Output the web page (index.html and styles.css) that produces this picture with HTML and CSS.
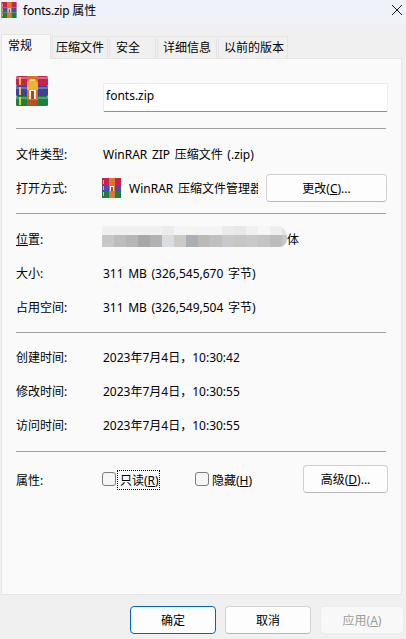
FILE: index.html
```html
<!DOCTYPE html>
<html lang="zh-CN">
<head>
  <meta charset="UTF-8" />
  <title>fonts.zip 属性</title>
  <link rel="stylesheet" href="styles.css">
</head>
<body>
  <div class="window">
    <div class="titlebar">
      <svg class="title-icon" viewBox="0 0 19 20">
        <use href="#rar-small"></use>
      </svg>
      <span class="title-text">fonts.zip 属性</span>
      <svg class="close" viewBox="0 0 10 10">
        <path d="M0 0L10 10M10 0L0 10" stroke="#1a1a1a" stroke-width="1" fill="none"/>
      </svg>
    </div>

    <div class="tabs">
      <div class="tab tab-active">常规</div>
      <div class="tab tab-zip">压缩文件</div>
      <div class="tab tab-sec">安全</div>
      <div class="tab tab-info">详细信息</div>
      <div class="tab tab-prev">以前的版本</div>
    </div>

    <div class="panel">
      <div class="head">
        <svg class="file-icon" viewBox="0 0 32 30">
          <rect x="0" y="0" width="32" height="10" rx="1.5" fill="#c4234f"/>
          <rect x="0" y="1" width="32" height="2" fill="#e0647f"/>
          <rect x="0" y="10" width="32" height="10" rx="1" fill="#3f3f9c"/>
          <rect x="0" y="11" width="32" height="2" fill="#6f6fc4"/>
          <rect x="0" y="20" width="32" height="10" rx="1.5" fill="#1c7f3f"/>
          <rect x="0" y="21" width="32" height="2" fill="#46a868"/>
          <rect x="3" y="1" width="2" height="8" fill="#f2c230"/>
          <rect x="3" y="11" width="2" height="8" fill="#f2c230"/>
          <rect x="3" y="21" width="2" height="8" fill="#f2c230"/>
          <rect x="11" y="0" width="11" height="30" fill="#d9702a"/>
          <rect x="11" y="24" width="11" height="6" fill="#b8501c"/>
          <path d="M14 3h5l3 4v7H11V7z" fill="#eeb23a"/>
          <rect x="14" y="3" width="5" height="2" fill="#f8d878"/>
          <rect x="13" y="14" width="7" height="9" fill="#f6efe4"/>
          <rect x="15" y="15" width="3" height="8" fill="#a9481a"/>
        </svg>
        <div class="name-box">fonts.zip</div>
      </div>

      <div class="section">
        <div class="row">
          <span class="label">文件类型:</span>
          <span>WinRAR ZIP 压缩文件 (.zip)</span>
        </div>
        <div class="row">
          <span class="label">打开方式:</span>
          <svg class="app-icon" viewBox="0 0 19 20">
            <g id="rar-small">
              <rect x="0" y="0" width="19" height="7" fill="#c4234f"/>
              <rect x="0" y="7" width="19" height="6" fill="#4a4aa8"/>
              <rect x="0" y="13" width="19" height="7" fill="#1c7f3f"/>
              <rect x="1" y="2" width="1" height="4" fill="#f2c230"/>
              <rect x="1" y="8" width="1" height="4" fill="#f2c230"/>
              <rect x="1" y="14" width="1" height="4" fill="#f2c230"/>
              <rect x="7" y="0" width="6" height="20" fill="#e0762a"/>
              <rect x="8" y="8" width="4" height="5" fill="#f6efe4"/>
              <rect x="9" y="9" width="2" height="4" fill="#a9481a"/>
            </g>
          </svg>
          <span class="app-name">WinRAR 压缩文件管理器</span>
          <button class="btn btn-change">更改(<u>C</u>)...</button>
        </div>
      </div>

      <div class="section">
        <div class="row">
          <span class="label"><u>位</u>置:</span>
          <span class="blur"></span><span>体</span>
        </div>
        <div class="row">
          <span class="label">大小:</span>
          <span>311 MB (326,545,670 字节)</span>
        </div>
        <div class="row">
          <span class="label">占用空间:</span>
          <span>311 MB (326,549,504 字节)</span>
        </div>
      </div>

      <div class="section section-times">
        <div class="row">
          <span class="label">创建时间:</span>
          <span>2023年7月4日，10:30:42</span>
        </div>
        <div class="row">
          <span class="label">修改时间:</span>
          <span>2023年7月4日，10:30:55</span>
        </div>
        <div class="row">
          <span class="label">访问时间:</span>
          <span>2023年7月4日，10:30:55</span>
        </div>
      </div>

      <div class="attrs">
        <span class="label">属性:</span>
        <span class="check check-first"></span>
        <span class="check-label check-focus">只读(<u>R</u>)</span>
        <span class="check check-second"></span>
        <span class="check-label">隐藏(<u>H</u>)</span>
        <button class="btn btn-advanced">高级(<u>D</u>)...</button>
      </div>
    </div>

    <div class="footer">
      <button class="btn btn-foot btn-default">确定</button>
      <button class="btn btn-foot">取消</button>
      <button class="btn btn-foot btn-disabled">应用(<u>A</u>)</button>
    </div>
  </div>
</body>
</html>
```

FILE: styles.css
```css
body {
  margin: 0;
  background: #f0f0f0;
  font-family: "Noto Sans", "Noto Sans CJK SC", sans-serif;
  font-size: 12px;
  color: #000;
  word-spacing: 1.5px;
  overflow: hidden;
}

.window {
  width: 406px;
  height: 639px;
  display: flex;
  flex-direction: column;
}

.titlebar {
  height: 25px;
  box-sizing: border-box;
  background: #eff3f9;
  display: flex;
  align-items: center;
  padding: 0 0 6px 1px;
}

.title-icon {
  width: 16px;
  height: 16px;
}

.title-text {
  margin-left: 6px;
  word-spacing: 0;
  letter-spacing: -0.2px;
}

.close {
  width: 10px;
  height: 10px;
  margin-left: auto;
  margin-right: 4px;
}

.tabs {
  display: flex;
  height: 33px;
  padding: 10px 0 0 1px;
  box-sizing: border-box;
  align-items: flex-end;
}

.tab {
  height: 21px;
  line-height: 22px;
  margin-left: 1px;
  padding-left: 5px;
  background: #f0f0f0;
  border: 1px solid #e5e5e5;
  border-bottom: none;
  box-sizing: content-box;
}

.tab-active {
  width: 42px;
  height: 24px;
  margin-left: 0;
  padding-left: 6px;
  line-height: 21px;
  background: #f9f9f9;
  position: relative;
  z-index: 1;
  margin-bottom: -1px;
}

.tab-zip { width: 51px; padding-left: 3px; }
.tab-sec { width: 39px; padding-left: 6px; }
.tab-info { width: 53px; }
.tab-prev { width: 63px; }

.panel {
  width: 401px;
  height: 537px;
  margin-left: 1px;
  box-sizing: border-box;
  background: #fafafa;
  border: 1px solid #e5e5e5;
  padding: 0 15px 0 14px;
}

.head {
  height: 70px;
  display: flex;
  align-items: flex-start;
  border-bottom: 1px solid #a0a0a0;
  box-sizing: border-box;
}

.file-icon {
  width: 32px;
  height: 30px;
  margin-top: 17px;
  flex: none;
}

.name-box {
  width: 285px;
  height: 29px;
  margin: 24px -2px 0 55px;
  padding-left: 2px;
  box-sizing: border-box;
  flex: none;
  background: #fff;
  border: 1px solid #ececec;
  border-bottom: 1px solid #8f8f8f;
  border-radius: 2px;
  line-height: 24px;
}

.section {
  padding: 8px 0;
  border-bottom: 1px solid #a0a0a0;
}

.section-times {
  padding: 7px 0 9px;
}

.row {
  height: 34px;
  display: flex;
  align-items: center;
}

.label {
  width: 87px;
  flex: none;
}

.app-icon {
  width: 19px;
  height: 20px;
  margin-left: -1px;
  margin-right: 8px;
  flex: none;
}

.app-name {
  width: 129px;
  white-space: nowrap;
  overflow: hidden;
  flex: none;
}

.btn {
  font-family: inherit;
  font-size: 12px;
  word-spacing: 0;
  color: #000;
  background: #fdfdfd;
  border: 1px solid #d0d0d0;
  border-bottom-color: #b8b8b8;
  border-radius: 4px;
  box-sizing: border-box;
  height: 28px;
  padding: 0;
  flex: none;
}

.btn-change {
  width: 121px;
  margin-left: 8px;
}

.blur {
  width: 185px;
  height: 21px;
  margin: 0 0 5px -1px;
  flex: none;
  border-radius: 0 10px 8px 0;
  background:
    linear-gradient(90deg, #f1f1f1 0 60px, #ececec 60px 72px, #f3f4f6 72px 84px, #f5f4f2 84px 96px, #f2f3f5 96px 108px, #f4f4f4 108px 120px, #ebebeb 120px 132px, #e8e8e8 132px 144px, #f0f0f0 144px 156px, #f6f6f6 156px 168px, #eeeeee 168px 180px, #e4e4e4 180px) top left / 100% 9px no-repeat,
    linear-gradient(90deg, #c8c8c6 0 12px, #bdbdbb 12px 24px, #b5b6b5 24px 36px, #a9a8a6 36px 48px, #b0b2b4 48px 60px, #dadddf 60px 72px, #cdc9c4 72px 84px, #abaeb4 84px 96px, #bbbab8 96px 108px, #c0c0be 108px 120px, #c8c9cc 120px 132px, #c6c6c4 132px 144px, #c9c9c7 144px 156px, #c4c4c4 156px 168px, #bcbcbc 168px 180px, #c6c6c4 180px);
}

.attrs {
  height: 56px;
  display: flex;
  align-items: center;
}

.check {
  width: 14px;
  height: 14px;
  border: 1px solid #7c7c7c;
  border-radius: 3px;
  box-sizing: border-box;
  background: #f5f5f5;
  flex: none;
  margin-bottom: 2px;
}

.check-first {
  margin-left: -1px;
}

.check-label {
  margin-left: 3px;
  white-space: nowrap;
  word-spacing: 0;
}

.check-focus {
  width: 39px;
  margin-left: 2px;
  padding-left: 2px;
  outline: 1px dotted #000;
}

.check-second {
  margin-left: 36px;
}

.btn-advanced {
  width: 85px;
  margin-left: auto;
  margin-right: -2px;
  margin-bottom: 2px;
}

.footer {
  display: flex;
  padding: 11px 0 0 130px;
  gap: 9px;
}

.btn-foot {
  width: 86px;
}

.btn-default {
  border: 1px solid #0067c0;
}

.btn-disabled {
  color: #9c9c9c;
  background: #f8f8f8;
  border-color: #ececec;
  width: 84px;
}
```
